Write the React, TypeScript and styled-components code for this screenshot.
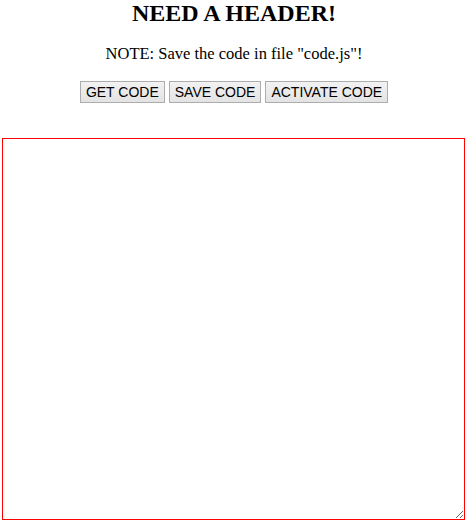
import React from "react";
import styled, { createGlobalStyle } from "styled-components";

const Global = createGlobalStyle`
  html, body { margin: 0; padding: 0; background: #fff; }
  body { font-family: "Liberation Serif", "Times New Roman", serif; color: #000; }
`;

const Page = styled.div`
  display: flex;
  flex-direction: column;
  align-items: center;
`;

const Title = styled.h2`
  margin: 0;
  font-size: 24px;
  line-height: 27px;
  font-weight: bold;
  text-align: center;
`;

const Note = styled.p`
  margin: 17px 0 0;
  font-size: 16.5px;
  line-height: 19px;
  text-align: center;
`;

const Toolbar = styled.div`
  display: flex;
  gap: 4px;
  margin-top: 18px;
`;

const Button = styled.button`
  font-family: "Liberation Sans", Arial, sans-serif;
  font-size: 14px;
  line-height: 16px;
  height: 22px;
  padding: 1px 5px;
  color: #000;
  background: linear-gradient(#f2f2f2, #e3e3e3);
  border: 1px solid #adadad;
  border-radius: 0;
`;

const Editor = styled.textarea`
  box-sizing: border-box;
  display: block;
  align-self: stretch;
  margin: 35px 3px 0 2px;
  height: 382px;
  border: 1px solid #ff0000;
  outline: none;
  resize: both;
  font-family: "Liberation Mono", monospace;
  font-size: 13px;
`;

export default function App() {
  return (
    <>
      <Global />
      <Page>
        <Title>NEED A HEADER!</Title>
        <Note>NOTE: Save the code in file "code.js"!</Note>
        <Toolbar>
          <Button>GET CODE</Button>
          <Button>SAVE CODE</Button>
          <Button>ACTIVATE CODE</Button>
        </Toolbar>
        <Editor />
      </Page>
    </>
  );
}
